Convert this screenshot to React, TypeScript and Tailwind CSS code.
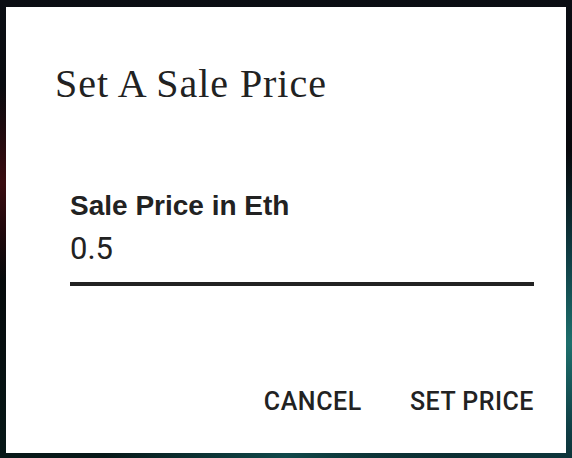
import React, { useState } from 'react';

// Sale price dialog over a dark backdrop
export default function App() {
  const [price, setPrice] = useState('0.5');

  return (
    <div className="w-[572px] h-[458px] overflow-hidden bg-[radial-gradient(ellipse_at_100%_75%,#1d6f6c_0%,#0f3d44_18%,transparent_40%),radial-gradient(ellipse_at_0%_40%,#3a0c10_0%,transparent_25%),radial-gradient(ellipse_at_50%_100%,#10484a_0%,transparent_45%),linear-gradient(180deg,#0b0e14_0%,#050507_50%,#071818_100%)] pl-[6px] pr-[6px] pt-[7px]">
      <div className="w-[560px] h-[446px] bg-white flex flex-col">
        <h2 className="pl-[49px] pt-[53px] text-[40px] leading-[48px] tracking-[0.95px] text-[#222] font-['Liberation_Serif',serif] font-normal">
          Set A Sale Price
        </h2>

        <div className="pl-[64px] pr-[32px] pt-[82px] flex flex-col">
          <label className="text-[28px] leading-[32px] font-bold text-[#222] font-['Liberation_Sans',Arial,sans-serif]">
            Sale Price in Eth
          </label>
          <input
            value={price}
            onChange={e => setPrice(e.target.value)}
            className="mt-[9px] w-full bg-transparent outline-none text-[31px] leading-[36px] text-[#222] font-['Roboto',sans-serif] pb-[15px] border-b-4 border-[#222]"
          />
        </div>

        <div className="mt-auto mb-[36px] pr-[32px] flex justify-end items-center gap-[48px]">
          <button className="text-[25px] leading-[30px] font-medium tracking-[0.6px] text-[#222] font-['Roboto',sans-serif]">
            CANCEL
          </button>
          <button className="text-[25px] leading-[30px] font-medium tracking-[0.5px] text-[#222] font-['Roboto',sans-serif]">
            SET PRICE
          </button>
        </div>
      </div>
    </div>
  );
}
